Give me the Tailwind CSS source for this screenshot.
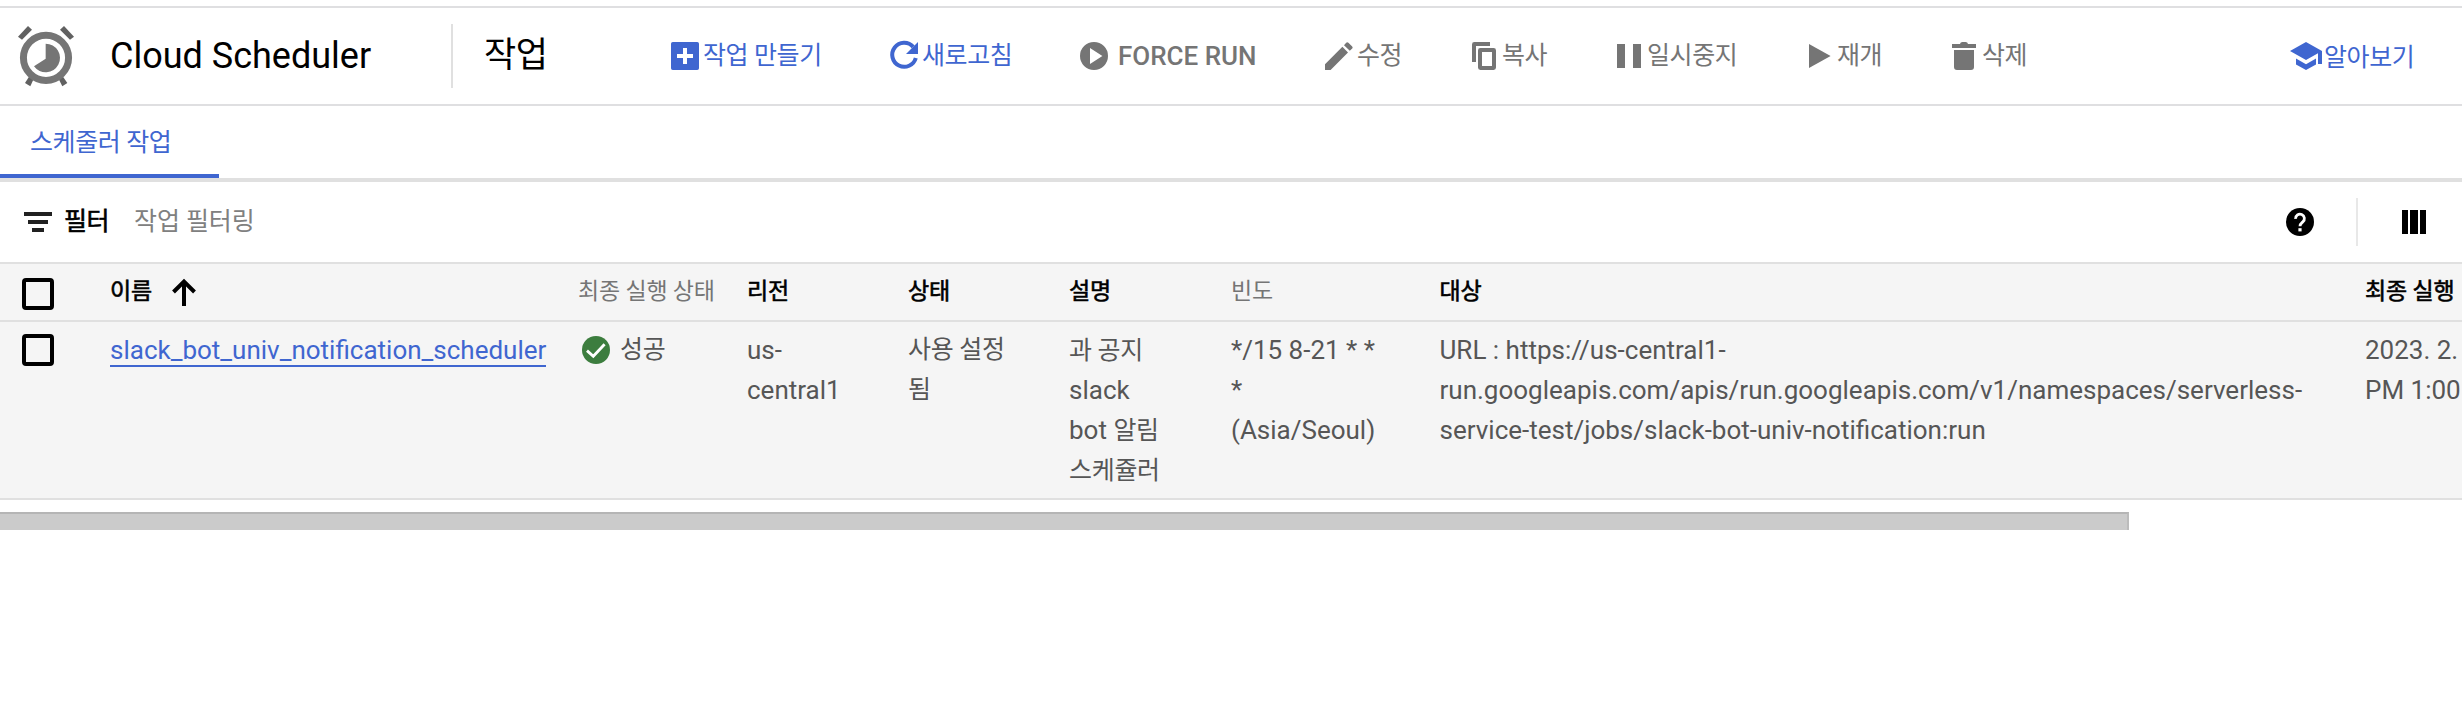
<!DOCTYPE html>
<html lang="ko">
<head>
<meta charset="utf-8">
<title>Cloud Scheduler</title>
<script src="https://cdn.jsdelivr.net/npm/@tailwindcss/browser@4"></script>
</head>
<body class="bg-white h-[718px] overflow-hidden font-[Roboto,'Noto_Sans_CJK_KR',sans-serif] text-black">
<div class="w-[2462px] h-[718px] overflow-hidden pt-[6px]">

  <!-- Page header and actions -->
  <header class="flex items-center h-[100px] border-y-2 border-[#dfdfe1] text-[#757575] text-[25px] leading-9 tracking-[-0.4px] whitespace-nowrap">
    <svg class="w-[100px] h-[96px] shrink-0" viewBox="0 0 300 288">
      <g fill="#616161">
        <path d="M54 86L84 54L96 65L66 95z"/><path d="M222 86L192 54L180 65L210 95z"/>
        <path d="M87 206L101 213L91 235L75 225z"/><path d="M189 206L176 213L187 235L202 225z"/>
      </g>
      <circle cx="138" cy="149.500" r="67.700" fill="none" stroke="#757575" stroke-width="21"/>
      <path d="M137 107A43 43 0 1 1 102 175L137 152z" fill="#757575"/>
    </svg>
    <h1 class="w-[351px] pl-[10px] text-4xl leading-12 tracking-normal text-black">Cloud Scheduler</h1>
    <div class="w-[2px] h-16 bg-[#e0e0e0]"></div>
    <h2 class="w-[214px] pl-[31px] text-[35px] leading-12 text-black">작업</h2>

    <div class="flex items-center w-[219px] text-[#3f66d0]">
      <svg class="size-9 shrink-0" viewBox="0 0 18 18" fill="currentColor"><path fill-rule="evenodd" d="M2.900 2h12.200a.9.9 0 0 1 .9.9v12.200a.9.9 0 0 1-.9.9H2.900a.9.9 0 0 1-.9-.9V2.900a.9.9 0 0 1 .9-.9zM8 5v3H5v2h3v3h2v-3h3V8h-3V5z"/></svg>
      <span>작업 만들기</span>
    </div>
    <div class="flex items-center w-[190px] text-[#3f66d0]">
      <svg class="size-9 shrink-0" viewBox="0 0 18 18" fill="currentColor"><path d="M13.600 4.400A6 6 0 1 0 14.900 10" fill="none" stroke="currentColor" stroke-width="2"/><path d="M16 2v6h-6z"/></svg>
      <span>새로고침</span>
    </div>
    <div class="flex items-center w-[245px]">
      <svg class="size-9 shrink-0" viewBox="0 0 18 18" fill="currentColor"><path fill-rule="evenodd" d="M9 2a7 7 0 1 0 0 14A7 7 0 1 0 9 2zM7 5l6.200 4L7 13z"/></svg>
      <span class="pl-[6px] text-[26px] font-medium tracking-normal">FORCE RUN</span>
    </div>
    <div class="flex items-center w-[145px]">
      <svg class="size-9 shrink-0" viewBox="0 0 18 18" fill="currentColor"><path d="M2 13.100L10.700 4.400L13.500 7.200L4.800 16H2zM11.500 3.600L12.600 2.400Q13.100 1.900 13.700 2.400L15.600 4.200Q16.100 4.800 15.600 5.300L14.400 6.400z"/></svg>
      <span>수정</span>
    </div>
    <div class="flex items-center w-[145px]">
      <svg class="size-9 shrink-0" viewBox="0 0 18 18" fill="currentColor"><path d="M12 2H4.200Q3 2 3 3.200V12h2V4h7z"/><path fill-rule="evenodd" d="M7.200 5h6.600Q15 5 15 6.200v8.600Q15 16 13.800 16H7.200Q6 16 6 14.800V6.200Q6 5 7.200 5zM8 7v7h5V7z"/></svg>
      <span>복사</span>
    </div>
    <div class="flex items-center w-[190px]">
      <svg class="size-9 shrink-0" viewBox="0 0 18 18" fill="currentColor"><path d="M3 3h4v12H3zM11 3h4v12h-4z"/></svg>
      <span>일시중지</span>
    </div>
    <div class="flex items-center w-[145px]">
      <svg class="size-9 shrink-0" viewBox="0 0 18 18" fill="currentColor"><path d="M4 3l10.800 6L4 15z"/></svg>
      <span>재개</span>
    </div>
    <div class="flex items-center">
      <svg class="size-9 shrink-0" viewBox="0 0 18 18" fill="currentColor"><path d="M3 3h4q.2-1 1.200-1h1.600q1 0 1.200 1h4v2H3zM4 6h10v8.500q0 1.500-1.500 1.500h-7Q4 16 4 14.500z"/></svg>
      <span>삭제</span>
    </div>
    <div class="flex items-center ml-auto w-[174px] text-[#3f66d0]">
      <svg class="size-9 shrink-0" viewBox="0 0 18 18" fill="currentColor"><path d="M9 2L1 6.500L9 11L15 7.600V13h2V6.500z"/><path d="M4 10.300v3L9 16l5-2.700v-3L9 13.100z"/></svg>
      <span class="pt-1">알아보기</span>
    </div>
  </header>

  <!-- Tabs -->
  <nav class="h-[76px] border-b-4 border-[#e0e0e0]">
    <div class="w-[219px] h-[72px] pt-[19px] pl-[30px] border-b-4 border-[#3f66d0] text-[#3f66d0] text-[25px] leading-9 tracking-[-0.4px]">스케줄러 작업</div>
  </nav>

  <!-- Filter bar -->
  <div class="flex items-center h-[82px] border-b-2 border-[#e0e0e0] text-[25px] leading-9">
    <svg class="w-7 h-5 ml-6" viewBox="0 0 28 20" fill="#212121"><path d="M0 0h28v4H0zM4 8h20v4H4zM8 16h12v4H8z"/></svg>
    <span class="w-[70px] pl-3 [-webkit-text-stroke:0.6px_black] tracking-[-0.6px] whitespace-nowrap">필터</span>
    <span class="pl-3 tracking-[-0.1px] text-[#808080]">작업 필터링</span>
    <svg class="size-7 ml-auto" viewBox="0 0 28 28"><circle cx="14" cy="14" r="14" fill="#000"/><path d="M9.600 10.800A4.400 4.400 0 1 1 16.800 13.900C15.200 15.300 14 16 14 18.300" fill="none" stroke="#fff" stroke-width="2.800"/><path d="M12.400 20.200h3.200v3.200h-3.200z" fill="#fff"/></svg>
    <div class="w-[2px] h-12 ml-[42px] bg-[#e8e8e8]"></div>
    <svg class="w-6 h-6 ml-11 mr-9" viewBox="0 0 24 24"><path d="M0 0h6v24H0zM8 0h8v24H8zM18 0h6v24h-6z"/></svg>
  </div>

  <!-- Jobs table -->
  <div class="grid grid-cols-[110px_468px_169px_161px_161px_162px_208.5px_925.5px_97px] items-center h-[58px] bg-[#f5f5f5] border-b-2 border-[#e0e0e0] text-[23px] leading-8 [-webkit-text-stroke:0.6px_black] tracking-[-0.2px] whitespace-nowrap">
    <div class="size-8 ml-[22px] mt-1 border-4 border-black rounded-[4px]"></div>
    <div class="flex items-center">이름
      <svg class="w-6 h-7 ml-5" viewBox="0 0 24 28" fill="none" stroke="#000" stroke-width="4"><path d="M12 28V4M1.500 14L12 3.500L22.500 14"/></svg>
    </div>
    <div class="[-webkit-text-stroke:0px] text-[#757575]">최종 실행 상태</div>
    <div>리전</div>
    <div>상태</div>
    <div>설명</div>
    <div class="[-webkit-text-stroke:0px] text-[#757575]">빈도</div>
    <div>대상</div>
    <div class="overflow-hidden">최종 실행</div>
  </div>
  <div class="grid grid-cols-[110px_468px_169px_161px_161px_162px_208.5px_925.5px_97px] h-[178px] pt-2 bg-[#f5f5f5] border-b-2 border-[#e0e0e0] text-[#565656] text-[26px] leading-10 whitespace-nowrap">
    <div class="size-8 ml-[22px] mt-1 border-4 border-black rounded-[4px]"></div>
    <div><a class="inline-block h-[37px] border-b-2 border-[#3f66d0] text-[#3f66d0]">slack_bot_univ_notification_scheduler</a></div>
    <div class="flex h-10 items-center text-[25px] tracking-[-0.3px]">
      <svg class="size-7 ml-1 mr-[10px]" viewBox="0 0 28 28"><circle cx="14" cy="14" r="14" fill="#3c7d3e"/><path d="M5 14.600L11.300 20.300L22.600 8.300" fill="none" stroke="#fff" stroke-width="2.800"/></svg>
      <span>성공</span>
    </div>
    <div>us-<br>central1</div>
    <div class="text-[25px] tracking-[-0.3px]">사용 설정<br>됨</div>
    <div><span class="text-[25px] leading-8 tracking-[-0.3px]">과 공지</span><br>slack<br>bot <span class="text-[25px] leading-8 tracking-[-0.3px]">알림</span><br><span class="text-[25px] leading-8 tracking-[-0.3px]">스케쥴러</span></div>
    <div>*/15 8-21 * *<br>*<br>(Asia/Seoul)</div>
    <div>URL : https://us-central1-<br>run.googleapis.com/apis/run.googleapis.com/v1/namespaces/serverless-<br>service-test/jobs/slack-bot-univ-notification:run</div>
    <div class="overflow-hidden">2023. 2.<br>PM 1:00</div>
  </div>

  <!-- Horizontal scrollbar -->
  <div class="w-[2129px] h-[18px] mt-3 bg-[#cbcbcb] border-t-2 border-r-2 border-t-[#b5b5b5] border-r-[#bcbcbc]"></div>
</div>
</body>
</html>
